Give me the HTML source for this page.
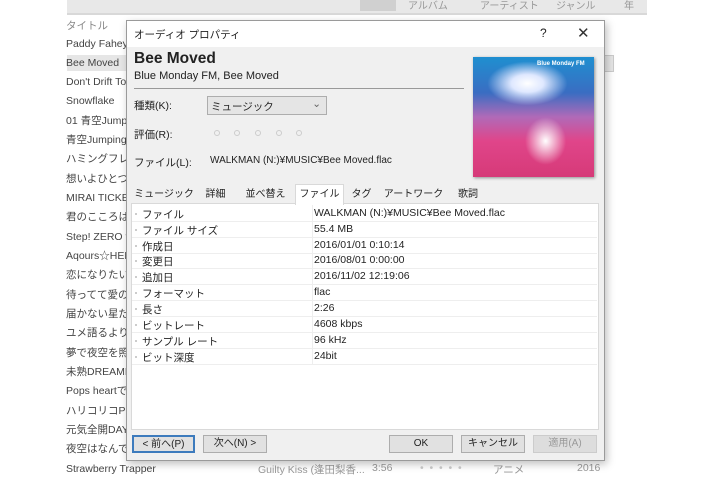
<!DOCTYPE html>
<html><head><meta charset="utf-8"><style>
*{margin:0;padding:0;box-sizing:border-box}
body{width:715px;height:477px;background:#fff;position:relative;overflow:hidden;font-family:"Liberation Sans","Noto Sans CJK JP",sans-serif;font-size:10.5px;color:#222}
.a{position:absolute;white-space:nowrap}
.li{position:absolute;left:66px;width:60px;overflow:hidden;white-space:nowrap;color:#444;font-size:10.5px;line-height:14px}
.row{position:absolute;left:132px;width:465px;height:16px;border-bottom:1px solid #eee;white-space:nowrap}
.row .k{position:absolute;left:10px;top:1px}
.row .v{position:absolute;left:182px;top:1px}
.row .d{position:absolute;left:3px;top:7px;width:2px;height:2px;background:#ccc}
.tab{position:absolute;top:186px;height:18px;line-height:17px;text-align:center;color:#222;white-space:nowrap;font-size:10px}
.btn{position:absolute;top:435px;height:18px;background:#e1e1e1;border:1px solid #adadad;text-align:center;line-height:16px;font-size:10px;white-space:nowrap}
.c{position:absolute;top:130px;width:6px;height:6px;border:1px solid #ccc;border-radius:50%}
</style></head><body>
<div class="a" style="left:67px;top:0;width:580px;height:15px;background:#e8e8e8;border-bottom:2px solid #d8d8d8"></div>
<div class="a" style="left:360px;top:0;width:36px;height:11px;background:#d0d0d0"></div>
<div class="a" style="left:408px;top:-3px;color:#999;font-size:10px">アルバム</div>
<div class="a" style="left:480px;top:-3px;color:#999;font-size:10px">アーティスト</div>
<div class="a" style="left:556px;top:-3px;color:#999;font-size:10px">ジャンル</div>
<div class="a" style="left:624px;top:-3px;color:#999;font-size:10px">年</div>
<div class="a" style="left:67px;top:55px;width:60px;height:16px;background:#e6e6e6"></div>
<div class="a" style="left:604px;top:55px;width:10px;height:17px;background:#e6e6e6;border:1px solid #ccc"></div>
<div class="li" style="top:19px;color:#888">タイトル</div>
<div class="li" style="top:37px">Paddy Fahey's</div>
<div class="li" style="top:56px">Bee Moved</div>
<div class="li" style="top:75px">Don't Drift To</div>
<div class="li" style="top:94px">Snowflake</div>
<div class="li" style="top:114px">01 青空Jumping</div>
<div class="li" style="top:133px">青空Jumping</div>
<div class="li" style="top:152px">ハミングフレンド</div>
<div class="li" style="top:172px">想いよひとつに</div>
<div class="li" style="top:191px">MIRAI TICKET</div>
<div class="li" style="top:210px">君のこころは輝</div>
<div class="li" style="top:230px">Step! ZERO to</div>
<div class="li" style="top:249px">Aqours☆HER</div>
<div class="li" style="top:268px">恋になりたいAQ</div>
<div class="li" style="top:288px">待ってて愛のう</div>
<div class="li" style="top:307px">届かない星だと</div>
<div class="li" style="top:326px">ユメ語るよりユメ</div>
<div class="li" style="top:346px">夢で夜空を照</div>
<div class="li" style="top:365px">未熟DREAMER</div>
<div class="li" style="top:384px">Pops heartで</div>
<div class="li" style="top:404px">ハリコリコPLEAS</div>
<div class="li" style="top:423px">元気全開DAY</div>
<div class="li" style="top:442px">夜空はなんでも</div>
<div class="li" style="top:462px;width:120px">Strawberry Trapper</div>
<div class="a" style="left:258px;top:462px;color:#999">Guilty Kiss (逢田梨香...</div>
<div class="a" style="left:372px;top:462px;color:#999">3:56</div>
<div class="a" style="left:420px;top:462px;color:#ccc">•&nbsp; •&nbsp; •&nbsp; •&nbsp; •</div>
<div class="a" style="left:493px;top:462px;color:#999">アニメ</div>
<div class="a" style="left:577px;top:462px;color:#999">2016</div>

<div class="a" style="left:126px;top:20px;width:479px;height:441px;background:#f0f0f0;border:1px solid #9a9a9a;box-shadow:2px 3px 8px rgba(0,0,0,.25)"></div>
<div class="a" style="left:127px;top:21px;width:477px;height:26px;background:#fff"></div>
<div class="a" style="left:134px;top:27px;font-size:10.5px">オーディオ プロパティ</div>
<div class="a" style="left:540px;top:26px;font-size:12px">?</div>
<div class="a" style="left:577px;top:24px;font-size:15px;color:#333">✕</div>
<div class="a" style="left:134px;top:50px;font-size:15.5px;font-weight:bold">Bee Moved</div>
<div class="a" style="left:134px;top:70px;font-size:11px">Blue Monday FM, Bee Moved</div>
<div class="a" style="left:134px;top:88px;width:330px;height:1px;background:#999"></div>
<div class="a" style="left:134px;top:98px">種類(K):</div>
<div class="a" style="left:207px;top:96px;width:120px;height:19px;background:#e5e5e5;border:1px solid #adadad;padding:2px 3px">ミュージック<span style="position:absolute;right:5px;top:1px;color:#666">⌄</span></div>
<div class="a" style="left:134px;top:127px">評価(R):</div>
<div class="c" style="left:214px"></div><div class="c" style="left:234px"></div><div class="c" style="left:255px"></div><div class="c" style="left:276px"></div><div class="c" style="left:296px"></div>
<div class="a" style="left:134px;top:155px">ファイル(L):</div>
<div class="a" style="left:210px;top:155px;font-size:10px">WALKMAN (N:)¥MUSIC¥Bee Moved.flac</div>
<div class="a" style="left:473px;top:57px;width:121px;height:120px;box-shadow:1px 1px 3px rgba(0,0,0,.4);background:radial-gradient(ellipse 40px 22px at 45% 22%,#fff 0%,#dfe8ff 40%,transparent 100%),radial-gradient(ellipse at 60% 70%,#fff 0%,transparent 20%),linear-gradient(180deg,#1f8fd0 0%,#3a6dc2 30%,#b06ab8 50%,#e0458a 70%,#d63a78 100%)"></div>
<div class="a" style="left:537px;top:61px;color:#fff;font-size:6px;font-weight:bold">Blue Monday FM</div>

<div class="a" style="left:131px;top:203px;width:468px;height:227px;background:#fff;border:1px solid #d9d9d9"></div>
<div class="tab" style="left:133px;width:62px">ミュージック</div>
<div class="tab" style="left:195px;width:41px">詳細</div>
<div class="tab" style="left:236px;width:59px">並べ替え</div>
<div class="tab" style="left:295px;width:49px;top:184px;height:21px;background:#fff;border:1px solid #d9d9d9;border-bottom:none;line-height:20px">ファイル</div>
<div class="tab" style="left:344px;width:35px">タグ</div>
<div class="tab" style="left:379px;width:69px">アートワーク</div>
<div class="tab" style="left:448px;width:40px">歌詞</div>
<div class="a" style="left:312px;top:205px;width:1px;height:160px;background:#eee"></div>
<div class="row" style="top:206px"><i class="d"></i><span class="k">ファイル</span><span class="v">WALKMAN (N:)¥MUSIC¥Bee Moved.flac</span></div>
<div class="row" style="top:222px"><i class="d"></i><span class="k">ファイル サイズ</span><span class="v">55.4 MB</span></div>
<div class="row" style="top:238px"><i class="d"></i><span class="k">作成日</span><span class="v">2016/01/01 0:10:14</span></div>
<div class="row" style="top:253px"><i class="d"></i><span class="k">変更日</span><span class="v">2016/08/01 0:00:00</span></div>
<div class="row" style="top:269px"><i class="d"></i><span class="k">追加日</span><span class="v">2016/11/02 12:19:06</span></div>
<div class="row" style="top:285px"><i class="d"></i><span class="k">フォーマット</span><span class="v">flac</span></div>
<div class="row" style="top:301px"><i class="d"></i><span class="k">長さ</span><span class="v">2:26</span></div>
<div class="row" style="top:317px"><i class="d"></i><span class="k">ビットレート</span><span class="v">4608 kbps</span></div>
<div class="row" style="top:333px"><i class="d"></i><span class="k">サンプル レート</span><span class="v">96 kHz</span></div>
<div class="row" style="top:349px"><i class="d"></i><span class="k">ビット深度</span><span class="v">24bit</span></div>

<div class="btn" style="left:132px;width:63px;border:2px solid #3d7bbd">&lt; 前へ(P)</div>
<div class="btn" style="left:203px;width:64px">次へ(N) &gt;</div>
<div class="btn" style="left:389px;width:64px">OK</div>
<div class="btn" style="left:461px;width:64px">キャンセル</div>
<div class="btn" style="left:533px;width:64px;color:#999;border-color:#ccc;background:#ddd">適用(A)</div>
</body></html>
